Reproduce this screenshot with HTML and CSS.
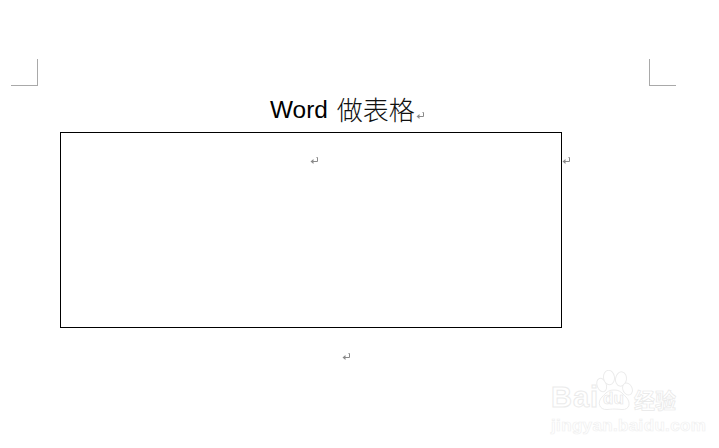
FILE: index.html
```html
<!DOCTYPE html>
<html lang="zh">
<head>
<meta charset="utf-8">
<title>Word 做表格</title>
<link rel="stylesheet" href="styles.css">
</head>
<body>
<svg class="defs" width="0" height="0" aria-hidden="true">
  <symbol id="ret" viewBox="0 0 8 8">
    <path d="M6.5 0.5H7.5V4.5H2" fill="none" stroke="#8a8a8a" stroke-width="1"/>
    <path d="M0.5 4.5L3.5 2V7Z" fill="#8a8a8a"/>
  </symbol>
</svg>
<main class="page">
  <div class="crops">
    <div class="crop crop-left"></div>
    <div class="crop crop-right"></div>
  </div>
  <h1 class="title"><span class="latin">Word</span> <span class="cjk">做表格</span><svg class="ret ret-title"><use href="#ret"/></svg></h1>
  <div class="table-row">
    <div class="table-cell"><svg class="ret"><use href="#ret"/></svg></div>
    <svg class="ret ret-side"><use href="#ret"/></svg>
  </div>
  <div class="after"><svg class="ret"><use href="#ret"/></svg></div>
</main>
<div class="watermark">
  <div class="wm-top">
    <span class="wm-bai">Bai</span>
    <div class="wm-paw">
      <svg viewBox="0 0 38 40" width="38" height="40">
        <g fill="#fff" stroke="#ececec" stroke-width="1">
          <ellipse cx="6.7" cy="15" rx="4.6" ry="7" transform="rotate(-20 6.7 15)"/>
          <ellipse cx="14" cy="7.5" rx="5.5" ry="7.2" transform="rotate(-8 14 7.5)"/>
          <ellipse cx="26" cy="9" rx="5.5" ry="7.2" transform="rotate(10 26 9)"/>
          <ellipse cx="32.5" cy="19" rx="4.6" ry="6.2" transform="rotate(-25 32.5 19)"/>
          <path d="M19 20C13 20 11 23 7 27C2 32 4 40 12 39.5C15 39.3 17 39 19 39C22 39 24 39.3 27 39.5C35 40 36 32 31 27C27 23 25 20 19 20Z"/>
        </g>
      </svg>
      <span class="wm-du">du</span>
    </div>
    <span class="wm-jy">经验</span>
  </div>
  <div class="wm-url">jingyan.baidu.com</div>
</div>
</body>
</html>
```
FILE: styles.css
```css
* { box-sizing: border-box; }
html, body { margin: 0; height: 100%; background: #fff; overflow: hidden; }
body { position: relative; width: 719px; height: 448px; }
.defs { position: absolute; }
.page { padding: 59px 43px 0 11px; }
.crops { display: flex; justify-content: space-between; }
.crop { width: 27px; height: 27px; border-bottom: 1px solid #a9a9a9; }
.crop-left { border-right: 1px solid #a9a9a9; }
.crop-right { border-left: 1px solid #a9a9a9; }
.title {
  margin: 3px 0 0;
  height: 43px;
  padding-left: 259px;
  display: flex;
  align-items: flex-start;
  font-weight: 400;
  color: #000;
  white-space: pre;
}
.latin { font: 24.4px/41px "Liberation Sans", Arial, sans-serif; }
.cjk { font: 300 26px/39px "Noto Sans CJK SC", sans-serif; margin-left: 9px; color: #111; }
.ret { width: 8px; height: 8px; display: block; flex: none; }
.ret-title { margin: 23px 0 0 1px; }
.table-row { margin-left: 49px; display: flex; align-items: flex-start; }
.table-cell {
  width: 502px;
  height: 196px;
  border: 1px solid #000;
  padding: 24px 0 0 249px;
}
.ret-side { margin: 25px 0 0 0; }
.after { padding: 25px 0 0 331px; }
.watermark {
  position: absolute;
  left: 551px;
  top: 370px;
  width: 130px;
  font-family: "Liberation Sans", Arial, sans-serif;
  color: #fff;
  -webkit-text-stroke: 1px #ebebeb;
}
.wm-top { display: flex; align-items: flex-end; height: 40px; }
.wm-bai { font-size: 29px; font-weight: 700; line-height: 26px; width: 44px; letter-spacing: 1px; }
.wm-paw { position: relative; width: 38px; height: 40px; flex: none; }
.wm-paw svg { display: block; }
.wm-du { position: absolute; left: 8px; bottom: 3px; font-size: 17px; font-weight: 700; line-height: 16px; -webkit-text-stroke: 0.6px #e4e4e4; }
.wm-jy { font: 700 21px/22px "Noto Sans CJK SC", sans-serif; margin-left: 1px; -webkit-text-stroke: 0.7px #e8e8e8; }
.wm-url { margin-top: 7px; font-size: 17px; font-weight: 700; line-height: 18px; letter-spacing: 0.35px; color: #fff; -webkit-text-stroke: 0.7px #f0f0f0; white-space: nowrap; }
```
